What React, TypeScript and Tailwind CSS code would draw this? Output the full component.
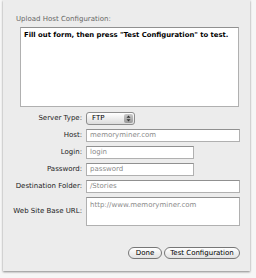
import React from 'react';

const font = { fontFamily: '"DejaVu Sans", "Liberation Sans", sans-serif' };

const Field: React.FC<{ value: string; wide?: boolean }> = ({ value, wide }) => (
    <div className={`h-[13px] ${wide ? 'w-[154px]' : 'w-[108px]'} bg-white border border-[#b0b0b0] border-t-[#909090] flex items-center px-[3px] text-[7px] leading-none text-[#8a8a8a] overflow-hidden whitespace-nowrap`}>
        {value}
    </div>
);

const Row: React.FC<{ label: string; children: React.ReactNode }> = ({ label, children }) => (
    <div className="flex items-center">
        <div className="w-[80px] text-right pr-[1px] text-[7px] leading-none text-[#222]">{label}</div>
        <div className="ml-[3px]">{children}</div>
    </div>
);

const App: React.FC = () => {
    return (
        <div className="w-[256px] h-[278px] bg-[#f6f6f6] overflow-hidden" style={font}>
            <div className="ml-[3px] w-[247px] h-[271px] bg-[#ececec] shadow-[0_1px_2px_rgba(0,0,0,0.45)] flex flex-col pt-[14px]">
                <div className="pl-[13px] h-[10px] text-[7px] leading-[10px] text-[#666]">Upload Host Configuration:</div>
                <div className="ml-[17px] mt-[3px] w-[219px] h-[80px] bg-white border border-[#b0b0b0] border-t-[#909090] px-[3px] pt-[2px] text-[6.85px] font-bold leading-[10px] text-black whitespace-nowrap">
                    Fill out form, then press "Test Configuration" to test.
                </div>
                <div className="mt-[5px] flex flex-col gap-[4px]">
                    <Row label="Server Type:">
                        <div className="h-[13px] w-[49px] rounded-[3px] border border-[#8d8d8d] bg-gradient-to-b from-white to-[#dcdcdc] flex items-center justify-between pl-[5px] pr-[1px]">
                            <span className="text-[7px] leading-none text-black">FTP</span>
                            <span className="w-[9px] h-[9px] rounded-[2px] bg-gradient-to-b from-[#c9c9c9] to-[#9a9a9a] flex items-center justify-center">
                                <svg width="5" height="7" viewBox="0 0 5 7">
                                    <path d="M0.5 2.8 L2.5 0.5 L4.5 2.8 Z M0.5 4.2 L2.5 6.5 L4.5 4.2 Z" fill="#333" />
                                </svg>
                            </span>
                        </div>
                    </Row>
                    <Row label="Host:"><Field value="memoryminer.com" wide /></Row>
                    <Row label="Login:"><Field value="login" /></Row>
                    <Row label="Password:"><Field value="password" /></Row>
                    <Row label="Destination Folder:"><Field value="/Stories" wide /></Row>
                    <div className="flex items-center">
                        <div className="w-[80px] text-right pr-[1px] text-[7px] leading-none text-[#222]">Web Site Base URL:</div>
                        <div className="ml-[3px] w-[154px] h-[29px] bg-white border border-[#b0b0b0] border-t-[#909090] px-[3px] pt-[2px] text-[7px] leading-[10px] text-[#8a8a8a]">
                            http://www.memoryminer.com
                        </div>
                    </div>
                </div>
                <div className="mt-[21px] flex justify-end gap-[2px] pr-[10px]">
                    <button className="h-[12px] w-[34px] rounded-full border border-[#777] bg-gradient-to-b from-white to-[#e2e2e2] text-[7px] leading-none text-black">Done</button>
                    <button className="h-[12px] w-[76px] rounded-full border border-[#777] bg-gradient-to-b from-white to-[#e2e2e2] text-[7px] leading-none text-black">Test Configuration</button>
                </div>
            </div>
        </div>
    );
};

export default App;
